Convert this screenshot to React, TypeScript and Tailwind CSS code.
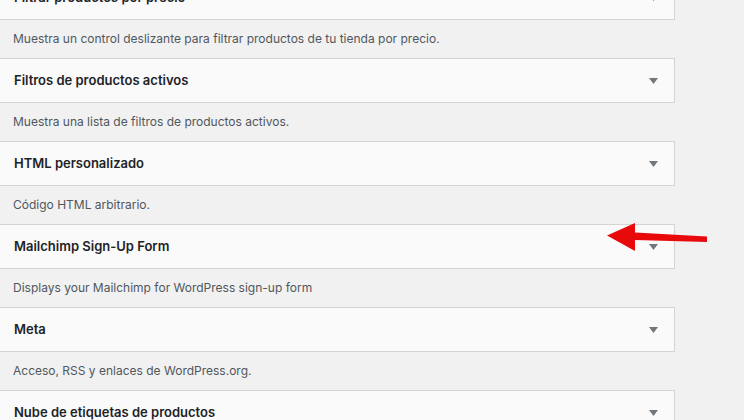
import React from 'react';

const widgets = [
  { title: 'Filtrar productos por precio', desc: 'Muestra un control deslizante para filtrar productos de tu tienda por precio.' },
  { title: 'Filtros de productos activos', desc: 'Muestra una lista de filtros de productos activos.' },
  { title: 'HTML personalizado', desc: 'Código HTML arbitrario.' },
  { title: 'Mailchimp Sign-Up Form', desc: 'Displays your Mailchimp for WordPress sign-up form' },
  { title: 'Meta', desc: 'Acceso, RSS y enlaces de WordPress.org.' },
  { title: 'Nube de etiquetas de productos', desc: 'Tus etiquetas de productos más utilizadas en formato nube.' },
];

const WidgetRow: React.FC<{ title: string; desc: string }> = ({ title, desc }) => (
  <div>
    <div className="h-[45px] border border-[#d4d4d4] bg-[#fafafa] flex items-center justify-between pl-[14px] pr-[16px]">
      <span className="text-[13px] font-semibold text-[#1d2327]">{title}</span>
      <svg width="9" height="6" viewBox="0 0 9 6">
        <path d="M0 0 L9 0 L4.5 6 Z" fill="#72777c" />
      </svg>
    </div>
    <div className="h-[38px] flex items-center pl-[14px] text-[12px] text-[#50575e]">{desc}</div>
  </div>
);

export default function App() {
  return (
    <div
      className="relative w-[744px] h-[420px] overflow-hidden bg-[#f1f1f1]"
      style={{ fontFamily: 'Inter, "Noto Sans", sans-serif' }}
    >
      <div className="w-[676px] -ml-px -mt-[25px]">
        {widgets.map((w) => (
          <WidgetRow key={w.title} title={w.title} desc={w.desc} />
        ))}
      </div>

      {/* red annotation arrow */}
      <svg className="absolute left-[600px] top-[215px]" width="120" height="45" viewBox="0 0 120 45">
        <path d="M35 17.5 L107 21.5 L107 27 L35 25 Z" fill="#e8090b" />
        <path d="M7 20.5 L35 8 L35 36 Z" fill="#e8090b" />
      </svg>
    </div>
  );
}
